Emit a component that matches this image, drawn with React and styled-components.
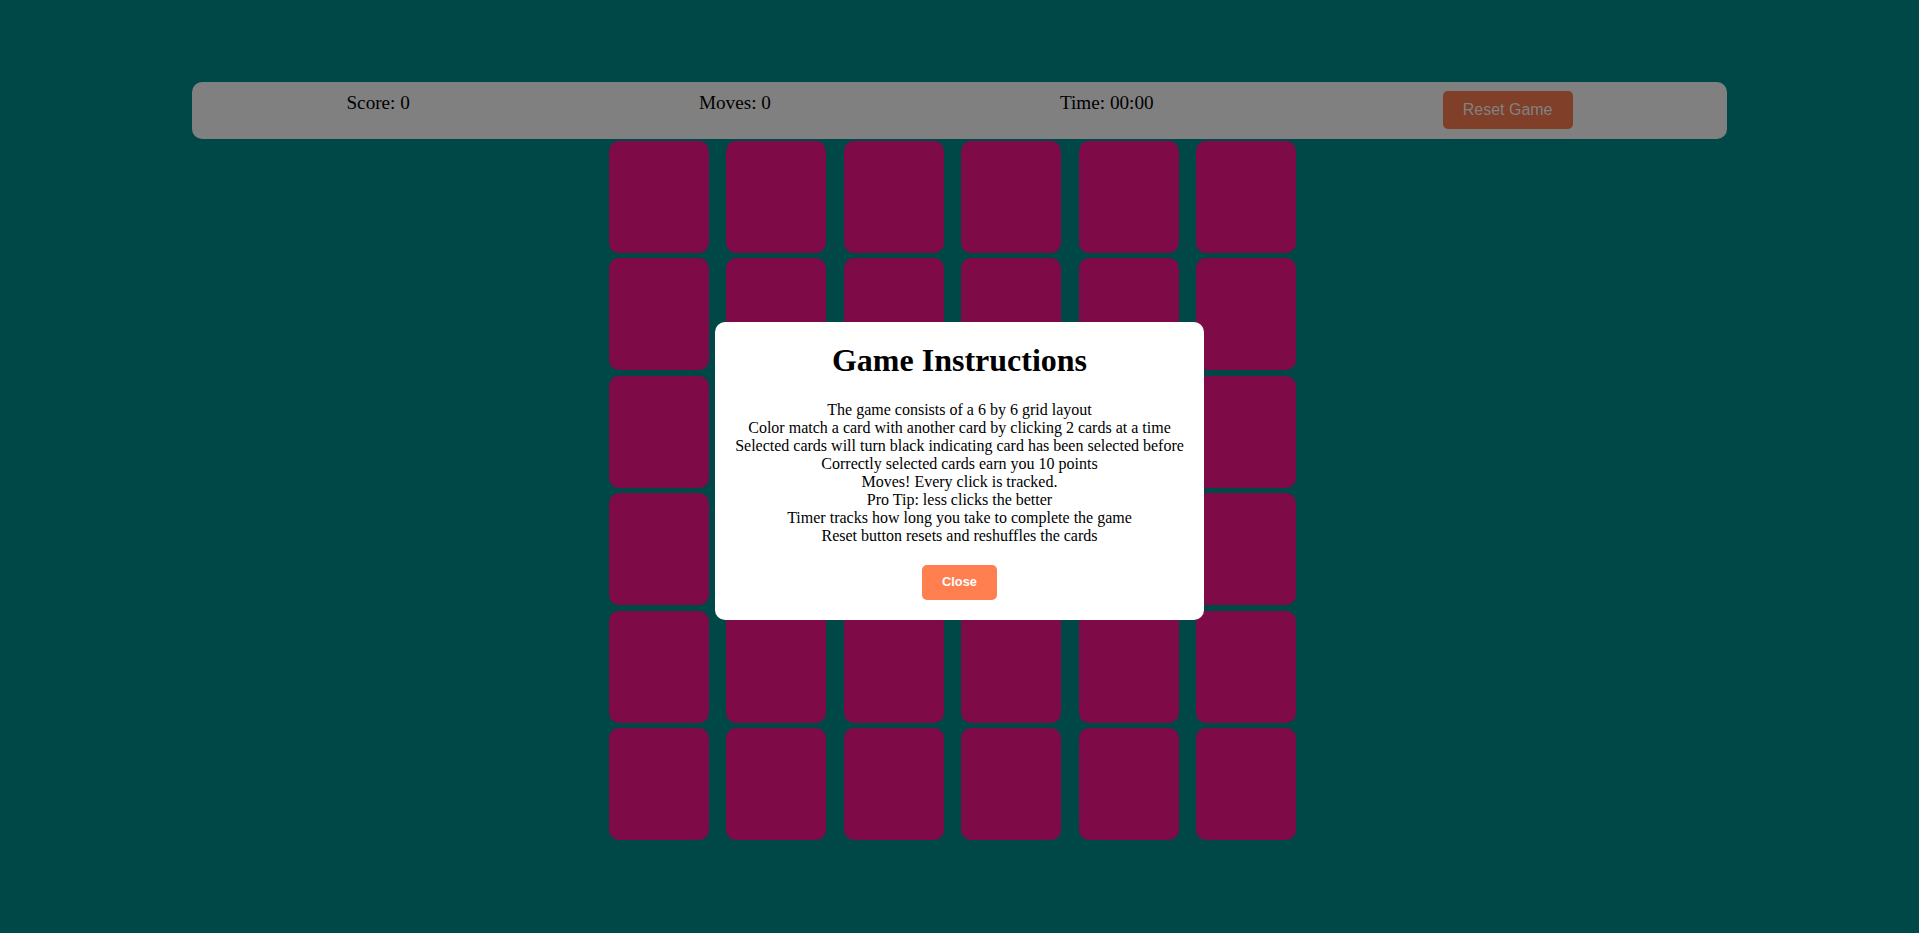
import React from "react";
import styled, { createGlobalStyle } from "styled-components";

const Global = createGlobalStyle`
  html, body {
    margin: 0;
    padding: 0;
    background: #004748;
    font-family: "Liberation Serif", "Times New Roman", serif;
    color: #000;
  }
`;

const Page = styled.div`
  min-height: 933px;
  padding-top: 82px;
  box-sizing: border-box;
`;

const Header = styled.header`
  width: 80%;
  margin: 0 auto;
  box-sizing: border-box;
  padding: 9px 10px 10px;
  background: #808080;
  border-radius: 10px;
  display: flex;
  justify-content: space-around;
  align-items: flex-start;
`;

const Stat = styled.div`
  font-size: 19.2px;
  line-height: 22px;
  padding-top: 1px;
  color: #000;
`;

const ResetButton = styled.button`
  font-family: "Liberation Sans", Arial, sans-serif;
  font-size: 16px;
  line-height: 18px;
  padding: 10px 20px;
  border: none;
  border-radius: 5px;
  background: #7f3f28;
  color: #828282;
`;

const Board = styled.div`
  display: grid;
  grid-template-columns: repeat(6, 100px);
  column-gap: 17.5px;
  row-gap: 5.5px;
  width: fit-content;
  margin: 1.5px auto 0;
  padding-right: 14px;
`;

const Card = styled.div`
  width: 100px;
  height: 112px;
  border-radius: 10px;
  background: #7f0a48;
`;

const Overlay = styled.div`
  position: fixed;
  inset: 0;
  display: flex;
  align-items: center;
  justify-content: center;
  padding-top: 9px;
`;

const Modal = styled.div`
  background: #fff;
  border-radius: 10px;
  padding: 20px;
  text-align: center;
  width: fit-content;
`;

const Title = styled.h1`
  font-size: 32px;
  font-weight: bold;
  margin: 0 0 21.44px;
`;

const Instructions = styled.div`
  font-size: 16px;
  line-height: 18px;
  margin-bottom: 20.5px;
`;

const CloseButton = styled.button`
  font-family: "Liberation Sans", Arial, sans-serif;
  font-size: 12.8px;
  font-weight: bold;
  line-height: 14.5px;
  padding: 10px 20px;
  border: none;
  border-radius: 5px;
  background: #ff7f50;
  color: #fff;
  display: block;
  margin: 0 auto;
`;

const lines = [
  "The game consists of a 6 by 6 grid layout",
  "Color match a card with another card by clicking 2 cards at a time",
  "Selected cards will turn black indicating card has been selected before",
  "Correctly selected cards earn you 10 points",
  "Moves! Every click is tracked.",
  "Pro Tip: less clicks the better",
  "Timer tracks how long you take to complete the game",
  "Reset button resets and reshuffles the cards",
];

export default function App() {
  return (
    <>
      <Global />
      <Page>
        <Header>
          <Stat>Score: 0</Stat>
          <Stat>Moves: 0</Stat>
          <Stat>Time: 00:00</Stat>
          <ResetButton>Reset Game</ResetButton>
        </Header>
        <Board>
          {Array.from({ length: 36 }).map((_, i) => (
            <Card key={i} />
          ))}
        </Board>
        <Overlay>
          <Modal>
            <Title>Game Instructions</Title>
            <Instructions>
              {lines.map((l) => (
                <div key={l}>{l}</div>
              ))}
            </Instructions>
            <CloseButton>Close</CloseButton>
          </Modal>
        </Overlay>
      </Page>
    </>
  );
}
